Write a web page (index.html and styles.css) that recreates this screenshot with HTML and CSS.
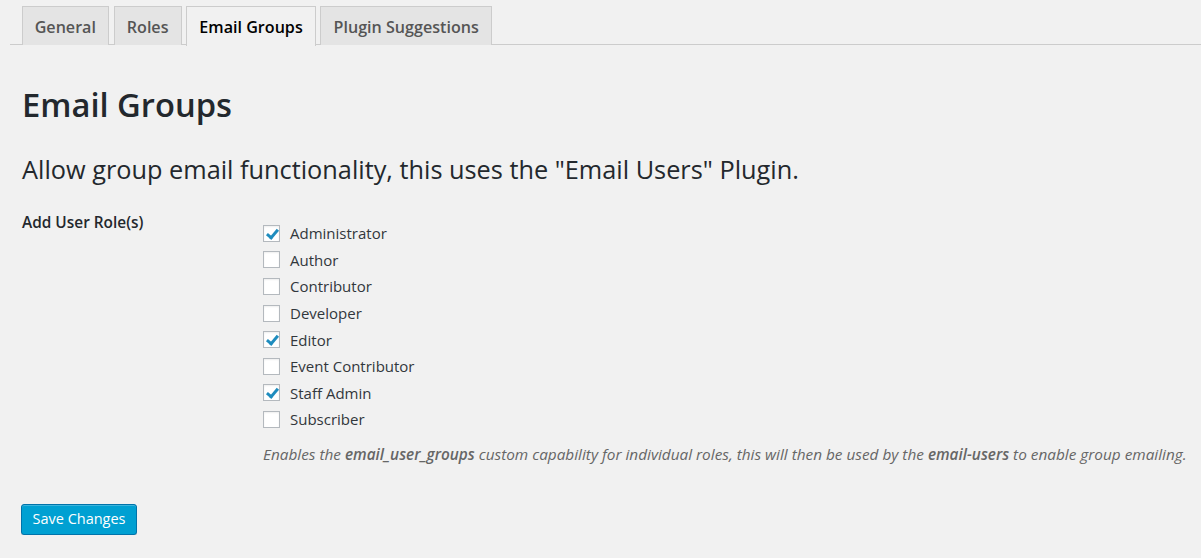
FILE: index.html
```html
<!DOCTYPE html>
<html>
<head>
<meta charset="utf-8">
<link rel="stylesheet" href="styles.css">
</head>
<body>
<div class="wrap">
  <nav class="tabs">
    <a class="tab">General</a>
    <a class="tab">Roles</a>
    <a class="tab active">Email Groups</a>
    <a class="tab">Plugin Suggestions</a>
  </nav>
  <div class="content">
    <h1 class="title">Email Groups</h1>
    <p class="intro">Allow group email functionality, this uses the "Email Users" Plugin.</p>
    <div class="field">
      <div class="field-label">Add User Role(s)</div>
      <div class="field-body">
        <label class="opt"><span class="cb checked"></span>Administrator</label>
        <label class="opt"><span class="cb"></span>Author</label>
        <label class="opt"><span class="cb"></span>Contributor</label>
        <label class="opt"><span class="cb"></span>Developer</label>
        <label class="opt"><span class="cb checked"></span>Editor</label>
        <label class="opt"><span class="cb"></span>Event Contributor</label>
        <label class="opt"><span class="cb checked"></span>Staff Admin</label>
        <label class="opt"><span class="cb"></span>Subscriber</label>
        <p class="desc">Enables the <b>email_user_groups</b> custom capability for individual roles, this will then be used by the <b>email-users</b> to enable group emailing.</p>
      </div>
    </div>
    <button class="btn-primary">Save Changes</button>
  </div>
</div>
</body>
</html>
```

FILE: styles.css
```css
html, body {
  margin: 0;
  padding: 0;
  background: #f1f1f1;
  font-family: "Open Sans", "Noto Sans", sans-serif;
  color: #23282d;
}
.wrap {
  padding-top: 6px;
}
.tabs {
  display: flex;
  gap: 4.5px;
  margin-left: 10px;
  padding-left: 11.5px;
  border-bottom: 1px solid #ccc;
  height: 38px;
}
.tab {
  display: block;
  box-sizing: border-box;
  height: 39px;
  padding: 7px 12.2px 5px;
  font-size: 16.1px;
  line-height: 26px;
  font-weight: 600;
  color: #555;
  background: #e4e4e4;
  border: 1px solid #ccc;
  border-bottom: none;
}
.tab.active {
  background: #f1f1f1;
  color: #000;
  height: 40px;
}
.content {
  padding-left: 22px;
}
.title {
  margin: 38px 0 0;
  font-size: 32.7px;
  font-weight: 600;
  line-height: 44px;
  color: #23282d;
}
.intro {
  margin: 26px 0 0;
  font-size: 25.3px;
  line-height: 32px;
  font-weight: 400;
  color: #23282d;
}
.field {
  display: flex;
  margin-top: 26px;
}
.field-label {
  width: 241px;
  font-size: 15.4px;
  font-weight: 600;
  line-height: 24px;
}
.field-body {
  padding-top: 9px;
}
.opt {
  display: flex;
  align-items: center;
  height: 26.6px;
  font-size: 15px;
  color: #32373c;
}
.cb {
  box-sizing: border-box;
  width: 17px;
  height: 17px;
  border: 1px solid #b4b9be;
  background: #fff;
  margin-right: 10px;
  box-shadow: inset 0 1px 2px rgba(0,0,0,0.07);
  position: relative;
}
.cb.checked::after {
  content: "";
  position: absolute;
  left: 5px;
  top: 1px;
  width: 4px;
  height: 9px;
  border: solid #1e8cbe;
  border-width: 0 3px 3px 0;
  transform: rotate(40deg);
}
.desc {
  margin: 9px 0 0;
  font-size: 15.35px;
  font-style: italic;
  color: #666;
  line-height: 24px;
}
.desc b {
  font-weight: 600;
}
.btn-primary {
  display: block;
  margin-top: 38px;
  margin-left: -1px;
  width: 116px;
  height: 31px;
  padding: 0;
  background: #00a0d2;
  border: 1px solid #0073aa;
  border-radius: 3px;
  box-shadow: inset 0 1px 0 rgba(120,200,230,0.5), 0 1px 0 rgba(0,0,0,0.15);
  color: #fff;
  font-family: "Open Sans", "Noto Sans", sans-serif;
  font-size: 14.5px;
  line-height: 28px;
}
```
